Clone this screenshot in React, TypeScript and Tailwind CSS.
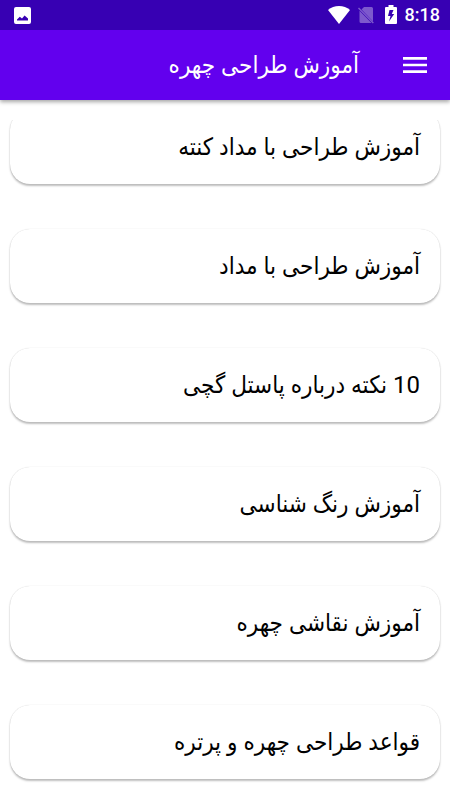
import React from 'react';
import { MdMenu } from 'react-icons/md';

const lessons = [
  'آموزش طراحی با مداد کنته',
  'آموزش طراحی با مداد',
  '10 نکته درباره پاستل گچی',
  'آموزش رنگ شناسی',
  'آموزش نقاشی چهره',
  'قواعد طراحی چهره و پرتره',
];

const StatusBar: React.FC = () => (
  <div dir="ltr" className="flex h-[30px] items-center bg-[#3700b3] pr-2.5 pl-3.5 text-white">
    <svg className="h-[17px] w-[17px]" viewBox="0 0 17 17" fill="currentColor" aria-hidden="true">
      <path
        fillRule="evenodd"
        d="M2 0h13a2 2 0 0 1 2 2v13a2 2 0 0 1-2 2H2a2 2 0 0 1-2-2V2a2 2 0 0 1 2-2zM3 13.5h11v-2L10.6 8.5 8 11.5 5.8 9.8 3 12.5z"
      />
    </svg>
    <div className="ml-auto flex items-center">
      <svg className="h-[18px] w-[22px]" viewBox="0 0 22 18" fill="currentColor" aria-hidden="true">
        <path d="M11 18 0 4C3 1.4 6.8 0 11 0s8 1.4 11 4z" />
      </svg>
      <svg className="ml-2 h-[18px] w-4" viewBox="0 0 16 18" fill="currentColor" aria-hidden="true">
        <g opacity="0.35">
          <path d="M6 1h7.5A1.5 1.5 0 0 1 15 2.5v13L3.5 3.5zM1.500 4.800 13.500 17H3a1.500 1.500 0 0 1-1.500-1.500z" />
          <path d="M1 1.600 0 2.600 14.800 17.600l1-1z" />
        </g>
      </svg>
      <svg className="ml-[11px] h-5 w-3" viewBox="0 0 12 20" fill="currentColor" aria-hidden="true">
        <path
          fillRule="evenodd"
          d="M3.5 0h5v2H11a1 1 0 0 1 1 1v15a1 1 0 0 1-1 1H1a1 1 0 0 1-1-1V3a1 1 0 0 1 1-1h2.5zM8.5 5h-4L3 11h2.5L4 16.5 9.2 9H6.8z"
        />
      </svg>
      <span className="ml-2 font-['Roboto',sans-serif] text-lg leading-none font-medium">8:18</span>
    </div>
  </div>
);

const App: React.FC = () => {
  return (
    <div dir="rtl" className="flex h-screen flex-col bg-white font-['Roboto','DejaVu_Sans_Condensed','DejaVu_Sans',sans-serif]">
      <header className="shadow-[0_2px_4px_rgba(0,0,0,0.35)]">
        <StatusBar />
        <div className="flex h-[70px] items-center bg-[#6200ee] px-[19px] text-white">
          <button type="button" aria-label="منو">
            <MdMenu className="h-8 w-8" />
          </button>
          <h1 className="mr-10 text-2xl">آموزش طراحی چهره</h1>
        </div>
      </header>

      <main className="mt-5 flex-1 overflow-hidden">
        {/* the first card is partly scrolled under the top edge */}
        <ul className="-mt-2.5 space-y-[45px] px-2.5">
          {lessons.map((lesson) => (
            <li key={lesson}>
              <button
                type="button"
                className="block h-[74px] w-full rounded-[20px] bg-white px-5 text-right text-2xl text-black shadow-[0_0_1px_rgba(0,0,0,0.2),0_2px_2px_rgba(0,0,0,0.25)]"
              >
                {lesson}
              </button>
            </li>
          ))}
        </ul>
      </main>
    </div>
  );
};

export default App;
